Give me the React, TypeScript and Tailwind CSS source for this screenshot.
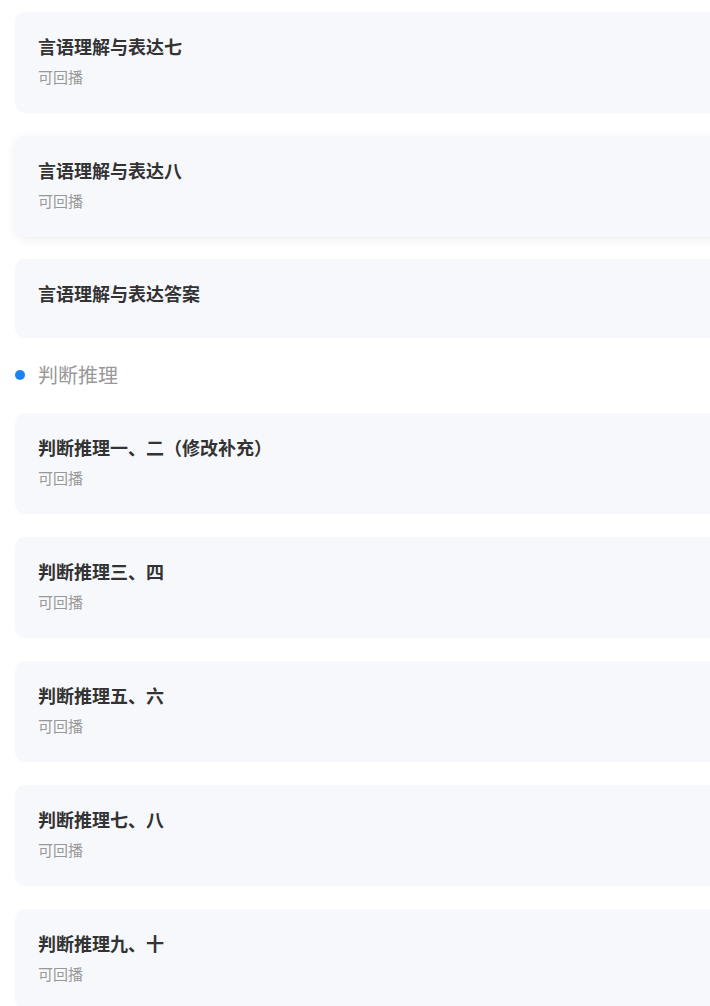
import React from "react";

type Item = { title: string; sub?: string; hover?: boolean };

const groupA: Item[] = [
  { title: "言语理解与表达七", sub: "可回播" },
  { title: "言语理解与表达八", sub: "可回播", hover: true },
  { title: "言语理解与表达答案" },
];

const groupB: Item[] = [
  { title: "判断推理一、二（修改补充）", sub: "可回播" },
  { title: "判断推理三、四", sub: "可回播" },
  { title: "判断推理五、六", sub: "可回播" },
  { title: "判断推理七、八", sub: "可回播" },
  { title: "判断推理九、十", sub: "可回播" },
];

function Card({ item }: { item: Item }) {
  return (
    <div
      className={
        "ml-[15px] -mr-[30px] rounded-[10px] bg-[#f7f8fc] pl-[23px] pt-[23px] " +
        (item.sub ? "pb-[26px] " : "pb-[34px] ") +
        (item.hover ? "mb-[22px] shadow-[0_2px_10px_rgba(0,0,0,0.08)]" : "mb-[23px]")
      }
    >
      <div className="text-[18px] leading-[22px] font-bold text-[#333333]">{item.title}</div>
      {item.sub && (
        <div className="mt-[10px] text-[15px] leading-[20px] text-[#999999]">{item.sub}</div>
      )}
    </div>
  );
}

export default function App() {
  return (
    <div
      className="w-full min-h-[1006px] overflow-hidden bg-white pt-[12px]"
      style={{ fontFamily: '"Noto Sans CJK SC", "Noto Sans", sans-serif' }}
    >
      {groupA.map((it) => (
        <Card key={it.title} item={it} />
      ))}
      <div className="flex h-[28px] items-center mb-[24px] ml-[15px]">
        <span className="h-[10px] w-[10px] rounded-full bg-[#1a84f7]" />
        <span className="ml-[13px] text-[20px] leading-[28px] text-[#999999]">判断推理</span>
      </div>
      {groupB.map((it) => (
        <Card key={it.title} item={it} />
      ))}
    </div>
  );
}
